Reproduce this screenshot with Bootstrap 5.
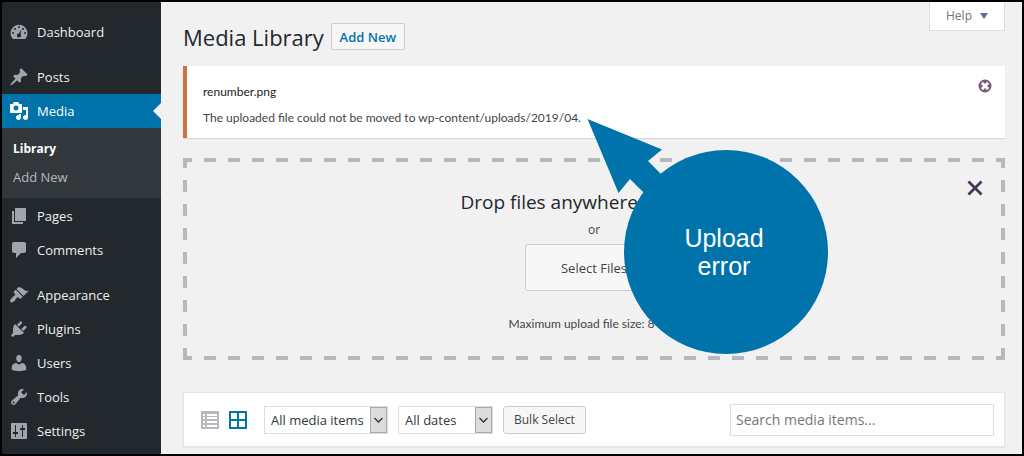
<!DOCTYPE html>
<html lang="en">
<head>
<meta charset="utf-8">
<meta name="viewport" content="width=device-width, initial-scale=1">
<title>Media Library</title>
<link href="https://cdn.jsdelivr.net/npm/bootstrap@5.3.0/dist/css/bootstrap.min.css" rel="stylesheet">
<style>
  :root { --wp-blue: #0073aa; --wp-dark: #23282d; --wp-sub: #32373c; --wp-page: #f1f1f1; --wp-dash: #b4b9be; }
  body { font-family: "Open Sans", "Noto Sans", sans-serif; font-size: 12px; line-height: 18px; color: #444; background: var(--wp-page); border: 2px solid #000; }
  a { text-decoration: none; }

  /* Admin menu */
  .admin-menu { width: 159px; flex: none; background: var(--wp-dark); padding-top: 13px; }
  .admin-menu .nav-link { height: 34px; padding: 0 0 0 7px; gap: 8px; font-size: 13px; line-height: 18px; color: #eee; position: relative; }
  .admin-menu .nav-link svg { width: 20px; height: 20px; fill: #a0a5aa; flex: none; }
  .admin-menu .nav-link.active { background: var(--wp-blue); color: #fff; }
  .admin-menu .nav-link.active svg { fill: #fff; }
  .admin-menu .nav-link.active::after { content: ""; position: absolute; right: 0; top: 9px; border: 8px solid transparent; border-left-width: 0; border-right-color: var(--wp-page); }
  .menu-gap { margin-top: 11px; }
  .submenu { background: var(--wp-sub); padding: 7px 0 7px 11px; margin-bottom: 1px; font-size: 13px; }
  .submenu a { display: block; line-height: 28px; color: #b4b9be; }
  .submenu a.current { font-size: 12px; color: #fff; font-weight: 700; }

  /* Content */
  .admin-body { padding: 0 17px 5px 22px; min-width: 0; }
  .page-head { height: 64px; gap: 7px; }
  .page-title { font-size: 22px; line-height: 30px; font-weight: 400; color: #23282d; margin: 0; }
  .btn-wp { --bs-btn-font-size: 12px; --bs-btn-line-height: 18px; --bs-btn-bg: #f7f7f7; --bs-btn-color: #444; --bs-btn-border-color: #ccc; --bs-btn-border-radius: 3px; --bs-btn-padding-x: 10px; --bs-btn-padding-y: 4px; --bs-btn-hover-bg: #fafafa; --bs-btn-hover-color: #23282d; --bs-btn-hover-border-color: #999; }
  .btn-title { --bs-btn-font-size: 13px; --bs-btn-color: var(--wp-blue); --bs-btn-border-radius: 2px; font-weight: 600; width: 74px; height: 27px; margin-top: 21px; padding: 0; }
  .btn-help { width: 76px; height: 29px; background: #fff; border: 1px solid #ddd; border-top: 0; border-radius: 0; color: #72777c; padding: 0; gap: 8px; }
  .fine-copy { font-family: Lato, "Open Sans", sans-serif; }
  .error-notice { background: #fff; border-left: 4px solid #ca7244; box-shadow: 0 1px 1px rgba(0,0,0,.1); height: 72px; padding: 17px 16px 0; }
  .error-notice p { margin: 0; }
  .btn-dismiss { top: 12px; right: 12px; width: 16px; height: 16px; }

  .drop-zone {
    --d: linear-gradient(90deg, var(--wp-dash) 50%, transparent 50%);
    --v: linear-gradient(180deg, var(--wp-dash) 50%, transparent 50%);
    margin-top: 20px; height: 202px; padding-top: 31px;
    background-image: var(--d), var(--d), var(--v), var(--v);
    background-size: 24px 4px, 24px 4px, 4px 24px, 4px 24px;
    background-position: -3px 0, -3px 100%, 0 -2px, 100% -2px;
    background-repeat: repeat-x, repeat-x, repeat-y, repeat-y;
  }
  .drop-zone h2 { font-size: 19px; line-height: 26px; font-weight: 400; color: #23282d; margin: 0; }
  .drop-zone p { margin: 6px 0 5px; }
  .btn-select { --bs-btn-font-size: 13px; width: 138px; height: 47px; }
  .drop-zone .max-size { margin: 24px 0 0; }
  .btn-close-zone { top: 21px; right: 21px; width: 18px; height: 18px; }

  .callout { left: 50%; top: -39px; margin-left: -7px; width: 241px; height: 235px; pointer-events: none; }
  .callout-text { left: 35px; top: 105px; width: 204px; font: 25px/28px "Liberation Sans", Arial, sans-serif; color: #fff; }

  .media-toolbar { background: #fff; border: 1px solid #e5e5e5; box-shadow: 0 1px 1px rgba(0,0,0,.04); margin-top: 32px; height: 55px; padding: 0 10px 0 17px; gap: 10px; }
  .view-switch { gap: 10px; margin-right: 7px; }
  .view-switch a, .view-switch svg { display: block; width: 18px; height: 18px; }
  .wp-select { appearance: none; height: 28px; border: 1px solid #ddd; border-radius: 0; padding: 0 0 0 6px; font-size: 13px; color: #32373c; background: #fff url("data:image/svg+xml,%3Csvg xmlns='http://www.w3.org/2000/svg' width='17' height='26'%3E%3Crect x='.5' y='.5' width='16' height='25' fill='%23dcdcdc' stroke='%23a9adb2'/%3E%3Cpath d='M4.500 11l4 4 4-4' fill='none' stroke='%23333' stroke-width='1.300'/%3E%3C/svg%3E") right center no-repeat; }
  .select-type { width: 124px; }
  .select-date { width: 95px; }
  .search-media { width: 264px; height: 32px; border: 1px solid #ddd; border-radius: 0; padding: 0 5px; font-size: 14px; color: #32373c; }
  .search-media::placeholder { color: #72777c; }
</style>
</head>
<body class="d-flex min-vh-100">
<nav class="admin-menu" aria-label="Admin menu">
  <div class="nav flex-column">
    <a class="nav-link d-flex align-items-center" href="#"><svg viewBox="0 0 20 20"><path fill-rule="evenodd" d="M3.760 17h12.480A8.500 8.500 0 1 0 3.760 17zM10 4a1 1 0 1 1 0 2 1 1 0 0 1 0-2zM6 6a1 1 0 1 1 0 2 1 1 0 0 1 0-2zm8 0a1 1 0 1 1 0 2 1 1 0 0 1 0-2zm-1.600 1.600L11.500 12.300a2 2 0 1 1-1.600-.800zM4 10a1 1 0 1 1 0 2 1 1 0 0 1 0-2zm12 0a1 1 0 1 1 0 2 1 1 0 0 1 0-2z"/></svg>Dashboard</a>
    <a class="nav-link d-flex align-items-center menu-gap" href="#"><svg viewBox="0 0 20 20"><path d="M10.440 3.020l1.820-1.820 6.360 6.350-1.830 1.820c-1.050-.680-2.480-.570-3.410.360l-.750.750c-.920.930-1.040 2.350-.350 3.410l-1.830 1.820-2.410-2.410-2.800 2.790c-.420.420-3.380 2.710-3.800 2.290s1.860-3.390 2.280-3.810l2.790-2.790L4.100 9.360l1.830-1.820c1.050.690 2.480.570 3.400-.360l.750-.750c.930-.920 1.050-2.350.360-3.410z"/></svg>Posts</a>
    <a class="nav-link d-flex align-items-center active" href="#"><svg viewBox="0 0 20 20"><path d="M13 11V4c0-.550-.450-1-1-1h-1.670L9 1H5L3.670 3H2c-.550 0-1 .450-1 1v7c0 .550.450 1 1 1h10c.550 0 1-.450 1-1zM7 4.500c1.380 0 2.500 1.120 2.500 2.500S8.380 9.500 7 9.500 4.500 8.380 4.500 7 5.620 4.500 7 4.500zM14 6h5v10.500c0 1.380-1.120 2.500-2.500 2.500S14 17.880 14 16.500s1.120-2.500 2.500-2.500c.170 0 .340.020.500.050V9h-3V6zm-4 8.050V13h2v3.500c0 1.380-1.120 2.500-2.500 2.500S7 17.880 7 16.500 8.120 14 9.500 14c.170 0 .340.020.500.050z"/></svg>Media</a>
  </div>
  <div class="submenu"><a class="current" href="#">Library</a><a href="#">Add New</a></div>
  <div class="nav flex-column">
    <a class="nav-link d-flex align-items-center" href="#"><svg viewBox="0 0 20 20"><path d="M6 15V2h11v13H6zm-1 1h9v2H3V5h2v11z"/></svg>Pages</a>
    <a class="nav-link d-flex align-items-center" href="#"><svg viewBox="0 0 20 20"><path d="M5 2h10c1.100 0 2 .900 2 2v7c0 1.100-.900 2-2 2h-3l-5 5v-5H5c-1.100 0-2-.900-2-2V4c0-1.100.900-2 2-2z"/></svg>Comments</a>
    <a class="nav-link d-flex align-items-center menu-gap" href="#"><svg viewBox="0 0 20 20"><path d="M14.480 11.060L7.410 3.990l1.500-1.500c.500-.560 2.300-.470 3.510.320 1.210.800 1.430 1.280 2.910 2.100 1.180.640 2.450 1.260 4.450.850zm-.710.710L6.700 4.700 4.930 6.470c-.390.390-.390 1.020 0 1.410l1.060 1.060c.390.390.390 1.030 0 1.420-.600.600-1.430 1.110-2.210 1.690-.350.260-.700.530-1.010.840C1.430 14.230.400 16.080 1.400 17.070c.990 1 2.840-.030 4.180-1.360.310-.310.580-.660.850-1.020.570-.780 1.080-1.610 1.690-2.210.390-.390 1.020-.390 1.410 0l1.060 1.060c.390.390 1.020.390 1.410 0z"/></svg>Appearance</a>
    <a class="nav-link d-flex align-items-center" href="#"><svg viewBox="0 0 20 20"><path d="M13.110 4.360L9.870 7.600 8 5.730l3.240-3.240c.350-.340 1.050-.200 1.560.320.520.510.660 1.210.310 1.550zm-8 1.770l.910-1.120 9.010 9.010-1.190.840c-.710.710-2.630 1.160-3.820 1.160H6.140L4.900 17.260c-.590.590-1.540.590-2.120 0-.590-.580-.590-1.530 0-2.120l1.240-1.240v-3.880c0-1.130.400-3.190 1.090-3.890zm7.260 3.970l3.240-3.240c.340-.350 1.040-.210 1.550.310.520.510.660 1.210.310 1.550l-3.240 3.250z"/></svg>Plugins</a>
    <a class="nav-link d-flex align-items-center" href="#"><svg viewBox="0 0 20 20"><path d="M10 9.250c-2.270 0-2.730-3.440-2.730-3.440C7 4.020 7.820 2 9.970 2c2.160 0 2.980 2.020 2.710 3.810 0 0-.410 3.440-2.680 3.440zm0 2.570L12.720 10c2.390 0 4.520 2.330 4.520 4.530v2.490s-3.650 1.130-7.240 1.130c-3.650 0-7.240-1.130-7.240-1.130v-2.490c0-2.250 1.940-4.480 4.470-4.480z"/></svg>Users</a>
    <a class="nav-link d-flex align-items-center" href="#"><svg viewBox="0 0 20 20"><path d="M16.680 9.770c-1.340 1.340-3.300 1.670-4.950.990l-5.410 6.520c-.990.990-2.590.990-3.580 0s-.990-2.590 0-3.570l6.520-5.420c-.680-1.650-.350-3.610.990-4.950 1.280-1.280 3.120-1.620 4.720-1.060l-2.890 2.890 2.820 2.820 2.860-2.870c.530 1.580.180 3.390-1.080 4.650zM3.810 16.210c.400.390 1.040.390 1.430 0 .400-.400.400-1.040 0-1.430-.390-.400-1.030-.400-1.430 0-.390.390-.390 1.030 0 1.430z"/></svg>Tools</a>
    <a class="nav-link d-flex align-items-center" href="#"><svg viewBox="0 0 20 20"><path fill-rule="evenodd" d="M18 17V3c0-.600-.400-1-1-1H3c-.600 0-1 .400-1 1v14c0 .600.400 1 1 1h14c.600 0 1-.400 1-1zM6 4h1v7h2v2H7v3H6v-3H4v-2h2zm7 0h1v3h2v2h-2v7h-1V9h-2V7h2z"/></svg>Settings</a>
  </div>
</nav>

<main class="admin-body flex-grow-1">
  <header class="page-head d-flex align-items-start">
    <h1 class="page-title mt-3 pt-1">Media Library</h1>
    <button type="button" class="btn btn-wp btn-title">Add New</button>
    <button type="button" class="btn btn-wp btn-help ms-auto d-flex align-items-center justify-content-center">Help <svg width="8" height="6" viewBox="0 0 8 6"><path d="M0 0h8L4 6z" fill="#5b6d99"/></svg></button>
  </header>

  <div class="error-notice fine-copy position-relative" role="alert">
    <p class="mb-2 text-dark">renumber.png</p>
    <p>The uploaded file could not be moved to wp-content/uploads/2019/04.</p>
    <button type="button" class="btn btn-dismiss position-absolute p-0 border-0 d-flex align-items-center justify-content-center" aria-label="Dismiss"><svg width="14" height="14" viewBox="0 0 14 14"><circle cx="7" cy="7" r="5.500" fill="#fff" stroke="#75597f" stroke-width="2"/><path d="M7 1v3.500M7 9.500V13M1 7h3.500M9.500 7H13" stroke="#75597f" stroke-width="3"/><path d="M4.300 4.300l5.400 5.400M9.700 4.300L4.300 9.700" stroke="#fff" stroke-width="2"/></svg></button>
  </div>

  <section class="drop-zone position-relative text-center">
    <h2>Drop files anywhere to upload</h2>
    <p>or</p>
    <button type="button" class="btn btn-wp btn-select">Select Files</button>
    <p class="max-size fine-copy">Maximum upload file size: 8 MB.</p>
    <button type="button" class="btn btn-close-zone position-absolute p-0 border-0 d-flex align-items-center justify-content-center" aria-label="Close uploader"><svg width="16" height="16" viewBox="0 0 16 16"><path d="M1.500 1.500l13 13M14.500 1.500l-13 13" stroke="#46364f" stroke-width="2.800"/></svg></button>
    <div class="callout position-absolute">
      <svg class="d-block" width="241" height="235" viewBox="587 119 241 235" fill="#0073aa"><circle cx="726" cy="252" r="102"/><path d="M587.500 119L662 149.500 648 161l40 40-17 19-41-41-11.500 14z"/></svg>
      <div class="callout-text position-absolute">Upload<br>error</div>
    </div>
  </section>

  <div class="media-toolbar d-flex align-items-center">
    <div class="view-switch d-flex">
      <a href="#" aria-label="List view"><svg viewBox="0 0 18 18"><path fill="#b4b9be" d="M0 0h18v18H0z"/><path fill="#fff" d="M2 3h2v2H2zm4 0h10v2H6zM2 6h2v2H2zm4 0h10v2H6zM2 10h2v2H2zm4 0h10v2H6zM2 14h2v2H2zm4 0h10v2H6z"/></svg></a>
      <a href="#" aria-label="Grid view"><svg viewBox="0 0 18 18"><path fill="#0073aa" d="M0 0h18v18H0z"/><path fill="#fff" d="M2 2h6v6H2zm8 0h6v6h-6zM2 10h6v6H2zm8 0h6v6h-6z"/></svg></a>
    </div>
    <select class="wp-select select-type" aria-label="Filter by type"><option>All media items</option></select>
    <select class="wp-select select-date" aria-label="Filter by date"><option>All dates</option></select>
    <button type="button" class="btn btn-wp">Bulk Select</button>
    <input type="search" class="search-media ms-auto" placeholder="Search media items..." aria-label="Search media items">
  </div>
</main>
<script src="https://cdn.jsdelivr.net/npm/bootstrap@5.3.0/dist/js/bootstrap.bundle.min.js"></script>
</body>
</html>
